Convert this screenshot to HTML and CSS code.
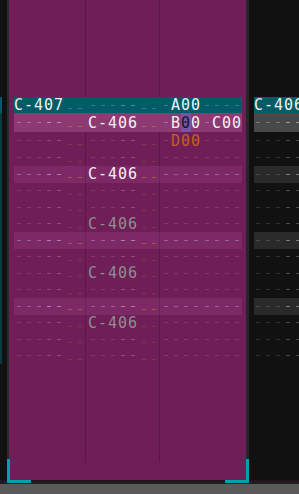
FILE: index.html
```html
<!DOCTYPE html>
<html>
<head>
<meta charset="utf-8">
<link rel="stylesheet" href="styles.css">
</head>
<body>
<div class="app">
  <div class="main">
    <div class="prev"><div class="prev-play"></div><div class="prev-rest"></div></div>
    <div class="gap"></div>
    <div class="lborder"></div>
    <div class="pattern">
      <div class="row play">
        <span class="g n"><b class="t">C-407</b></span>
        <span class="g v"><i class="m vo"></i><i class="m vo"></i></span>
        <span class="g n c2"><i class="m"></i><i class="m"></i><i class="m"></i><i class="m in"></i><i class="m in"></i></span>
        <span class="g v"><i class="m vo"></i><i class="m vo"></i></span>
        <span class="g f f1"><i class="m fx"></i><b class="t">A00</b></span>
        <span class="g f f2"><i class="m fx"></i><i class="m fx"></i><i class="m fx"></i><i class="m fx"></i></span>
      </div>
      <div class="row cur">
        <span class="g n"><i class="m"></i><i class="m"></i><i class="m"></i><i class="m in"></i><i class="m in"></i></span>
        <span class="g v"><i class="m vo"></i><i class="m vo"></i></span>
        <span class="g n c2"><b class="t">C-406</b></span>
        <span class="g v"><i class="m vo"></i><i class="m vo"></i></span>
        <span class="g f f1"><i class="m fx"></i><b class="t">B</b><b class="t k">0</b><b class="t">0</b></span>
        <span class="g f f2"><i class="m fx"></i><b class="t">C00</b></span>
      </div>
      <div class="row t17">
        <span class="g n"><i class="m"></i><i class="m"></i><i class="m"></i><i class="m in"></i><i class="m in"></i></span>
        <span class="g v"><i class="m vo"></i><i class="m vo"></i></span>
        <span class="g n c2"><i class="m"></i><i class="m"></i><i class="m"></i><i class="m in"></i><i class="m in"></i></span>
        <span class="g v"><i class="m vo"></i><i class="m vo"></i></span>
        <span class="g f f1"><i class="m fx"></i><b class="t or">D00</b></span>
        <span class="g f f2"><i class="m fx"></i><i class="m fx"></i><i class="m fx"></i><i class="m fx"></i></span>
      </div>
      <div class="row t17">
        <span class="g n"><i class="m"></i><i class="m"></i><i class="m"></i><i class="m in"></i><i class="m in"></i></span>
        <span class="g v"><i class="m vo"></i><i class="m vo"></i></span>
        <span class="g n c2"><i class="m"></i><i class="m"></i><i class="m"></i><i class="m in"></i><i class="m in"></i></span>
        <span class="g v"><i class="m vo"></i><i class="m vo"></i></span>
        <span class="g f f1"><i class="m fx"></i><i class="m fx"></i><i class="m fx"></i><i class="m fx"></i></span>
        <span class="g f f2"><i class="m fx"></i><i class="m fx"></i><i class="m fx"></i><i class="m fx"></i></span>
      </div>
      <div class="row hl">
        <span class="g n"><i class="m"></i><i class="m"></i><i class="m"></i><i class="m in"></i><i class="m in"></i></span>
        <span class="g v"><i class="m vo"></i><i class="m vo"></i></span>
        <span class="g n c2"><b class="t">C-406</b></span>
        <span class="g v"><i class="m vo"></i><i class="m vo"></i></span>
        <span class="g f f1"><i class="m fx"></i><i class="m fx"></i><i class="m fx"></i><i class="m fx"></i></span>
        <span class="g f f2"><i class="m fx"></i><i class="m fx"></i><i class="m fx"></i><i class="m fx"></i></span>
      </div>
      <div class="row">
        <span class="g n"><i class="m"></i><i class="m"></i><i class="m"></i><i class="m in"></i><i class="m in"></i></span>
        <span class="g v"><i class="m vo"></i><i class="m vo"></i></span>
        <span class="g n c2"><i class="m"></i><i class="m"></i><i class="m"></i><i class="m in"></i><i class="m in"></i></span>
        <span class="g v"><i class="m vo"></i><i class="m vo"></i></span>
        <span class="g f f1"><i class="m fx"></i><i class="m fx"></i><i class="m fx"></i><i class="m fx"></i></span>
        <span class="g f f2"><i class="m fx"></i><i class="m fx"></i><i class="m fx"></i><i class="m fx"></i></span>
      </div>
      <div class="row">
        <span class="g n"><i class="m"></i><i class="m"></i><i class="m"></i><i class="m in"></i><i class="m in"></i></span>
        <span class="g v"><i class="m vo"></i><i class="m vo"></i></span>
        <span class="g n c2"><i class="m"></i><i class="m"></i><i class="m"></i><i class="m in"></i><i class="m in"></i></span>
        <span class="g v"><i class="m vo"></i><i class="m vo"></i></span>
        <span class="g f f1"><i class="m fx"></i><i class="m fx"></i><i class="m fx"></i><i class="m fx"></i></span>
        <span class="g f f2"><i class="m fx"></i><i class="m fx"></i><i class="m fx"></i><i class="m fx"></i></span>
      </div>
      <div class="row">
        <span class="g n"><i class="m"></i><i class="m"></i><i class="m"></i><i class="m in"></i><i class="m in"></i></span>
        <span class="g v"><i class="m vo"></i><i class="m vo"></i></span>
        <span class="g n c2"><b class="t dim">C-406</b></span>
        <span class="g v"><i class="m vo"></i><i class="m vo"></i></span>
        <span class="g f f1"><i class="m fx"></i><i class="m fx"></i><i class="m fx"></i><i class="m fx"></i></span>
        <span class="g f f2"><i class="m fx"></i><i class="m fx"></i><i class="m fx"></i><i class="m fx"></i></span>
      </div>
      <div class="row hl">
        <span class="g n"><i class="m"></i><i class="m"></i><i class="m"></i><i class="m in"></i><i class="m in"></i></span>
        <span class="g v"><i class="m vo"></i><i class="m vo"></i></span>
        <span class="g n c2"><i class="m"></i><i class="m"></i><i class="m"></i><i class="m in"></i><i class="m in"></i></span>
        <span class="g v"><i class="m vo"></i><i class="m vo"></i></span>
        <span class="g f f1"><i class="m fx"></i><i class="m fx"></i><i class="m fx"></i><i class="m fx"></i></span>
        <span class="g f f2"><i class="m fx"></i><i class="m fx"></i><i class="m fx"></i><i class="m fx"></i></span>
      </div>
      <div class="row">
        <span class="g n"><i class="m"></i><i class="m"></i><i class="m"></i><i class="m in"></i><i class="m in"></i></span>
        <span class="g v"><i class="m vo"></i><i class="m vo"></i></span>
        <span class="g n c2"><i class="m"></i><i class="m"></i><i class="m"></i><i class="m in"></i><i class="m in"></i></span>
        <span class="g v"><i class="m vo"></i><i class="m vo"></i></span>
        <span class="g f f1"><i class="m fx"></i><i class="m fx"></i><i class="m fx"></i><i class="m fx"></i></span>
        <span class="g f f2"><i class="m fx"></i><i class="m fx"></i><i class="m fx"></i><i class="m fx"></i></span>
      </div>
      <div class="row">
        <span class="g n"><i class="m"></i><i class="m"></i><i class="m"></i><i class="m in"></i><i class="m in"></i></span>
        <span class="g v"><i class="m vo"></i><i class="m vo"></i></span>
        <span class="g n c2"><b class="t dim">C-406</b></span>
        <span class="g v"><i class="m vo"></i><i class="m vo"></i></span>
        <span class="g f f1"><i class="m fx"></i><i class="m fx"></i><i class="m fx"></i><i class="m fx"></i></span>
        <span class="g f f2"><i class="m fx"></i><i class="m fx"></i><i class="m fx"></i><i class="m fx"></i></span>
      </div>
      <div class="row">
        <span class="g n"><i class="m"></i><i class="m"></i><i class="m"></i><i class="m in"></i><i class="m in"></i></span>
        <span class="g v"><i class="m vo"></i><i class="m vo"></i></span>
        <span class="g n c2"><i class="m"></i><i class="m"></i><i class="m"></i><i class="m in"></i><i class="m in"></i></span>
        <span class="g v"><i class="m vo"></i><i class="m vo"></i></span>
        <span class="g f f1"><i class="m fx"></i><i class="m fx"></i><i class="m fx"></i><i class="m fx"></i></span>
        <span class="g f f2"><i class="m fx"></i><i class="m fx"></i><i class="m fx"></i><i class="m fx"></i></span>
      </div>
      <div class="row hl">
        <span class="g n"><i class="m"></i><i class="m"></i><i class="m"></i><i class="m in"></i><i class="m in"></i></span>
        <span class="g v"><i class="m vo"></i><i class="m vo"></i></span>
        <span class="g n c2"><i class="m"></i><i class="m"></i><i class="m"></i><i class="m in"></i><i class="m in"></i></span>
        <span class="g v"><i class="m vo"></i><i class="m vo"></i></span>
        <span class="g f f1"><i class="m fx"></i><i class="m fx"></i><i class="m fx"></i><i class="m fx"></i></span>
        <span class="g f f2"><i class="m fx"></i><i class="m fx"></i><i class="m fx"></i><i class="m fx"></i></span>
      </div>
      <div class="row">
        <span class="g n"><i class="m"></i><i class="m"></i><i class="m"></i><i class="m in"></i><i class="m in"></i></span>
        <span class="g v"><i class="m vo"></i><i class="m vo"></i></span>
        <span class="g n c2"><b class="t dim">C-406</b></span>
        <span class="g v"><i class="m vo"></i><i class="m vo"></i></span>
        <span class="g f f1"><i class="m fx"></i><i class="m fx"></i><i class="m fx"></i><i class="m fx"></i></span>
        <span class="g f f2"><i class="m fx"></i><i class="m fx"></i><i class="m fx"></i><i class="m fx"></i></span>
      </div>
      <div class="row">
        <span class="g n"><i class="m"></i><i class="m"></i><i class="m"></i><i class="m in"></i><i class="m in"></i></span>
        <span class="g v"><i class="m vo"></i><i class="m vo"></i></span>
        <span class="g n c2"><i class="m"></i><i class="m"></i><i class="m"></i><i class="m in"></i><i class="m in"></i></span>
        <span class="g v"><i class="m vo"></i><i class="m vo"></i></span>
        <span class="g f f1"><i class="m fx"></i><i class="m fx"></i><i class="m fx"></i><i class="m fx"></i></span>
        <span class="g f f2"><i class="m fx"></i><i class="m fx"></i><i class="m fx"></i><i class="m fx"></i></span>
      </div>
      <div class="row">
        <span class="g n"><i class="m"></i><i class="m"></i><i class="m"></i><i class="m in"></i><i class="m in"></i></span>
        <span class="g v"><i class="m vo"></i><i class="m vo"></i></span>
        <span class="g n c2"><i class="m"></i><i class="m"></i><i class="m"></i><i class="m in"></i><i class="m in"></i></span>
        <span class="g v"><i class="m vo"></i><i class="m vo"></i></span>
        <span class="g f f1"><i class="m fx"></i><i class="m fx"></i><i class="m fx"></i><i class="m fx"></i></span>
        <span class="g f f2"><i class="m fx"></i><i class="m fx"></i><i class="m fx"></i><i class="m fx"></i></span>
      </div>
    </div>
    <div class="rborder"></div>
    <div class="next">
      <div class="row play"><b class="t">C-406</b></div>
      <div class="row cur"><i class="m"></i><i class="m"></i><i class="m"></i><i class="m in"></i><i class="m in"></i></div>
      <div class="row t17"><i class="m"></i><i class="m"></i><i class="m"></i><i class="m in"></i><i class="m in"></i></div>
      <div class="row t17"><i class="m"></i><i class="m"></i><i class="m"></i><i class="m in"></i><i class="m in"></i></div>
      <div class="row hl"><i class="m"></i><i class="m"></i><i class="m"></i><i class="m in"></i><i class="m in"></i></div>
      <div class="row"><i class="m"></i><i class="m"></i><i class="m"></i><i class="m in"></i><i class="m in"></i></div>
      <div class="row"><i class="m"></i><i class="m"></i><i class="m"></i><i class="m in"></i><i class="m in"></i></div>
      <div class="row"><i class="m"></i><i class="m"></i><i class="m"></i><i class="m in"></i><i class="m in"></i></div>
      <div class="row hl"><i class="m"></i><i class="m"></i><i class="m"></i><i class="m in"></i><i class="m in"></i></div>
      <div class="row"><i class="m"></i><i class="m"></i><i class="m"></i><i class="m in"></i><i class="m in"></i></div>
      <div class="row"><i class="m"></i><i class="m"></i><i class="m"></i><i class="m in"></i><i class="m in"></i></div>
      <div class="row"><i class="m"></i><i class="m"></i><i class="m"></i><i class="m in"></i><i class="m in"></i></div>
      <div class="row hl"><i class="m"></i><i class="m"></i><i class="m"></i><i class="m in"></i><i class="m in"></i></div>
      <div class="row"><i class="m"></i><i class="m"></i><i class="m"></i><i class="m in"></i><i class="m in"></i></div>
      <div class="row"><i class="m"></i><i class="m"></i><i class="m"></i><i class="m in"></i><i class="m in"></i></div>
      <div class="row"><i class="m"></i><i class="m"></i><i class="m"></i><i class="m in"></i><i class="m in"></i></div>
    </div>
  </div>
  <div class="under"></div>
  <div class="footer"></div>
  <div class="focus focus-l"></div>
  <div class="focus focus-r"></div>
</div>
</body>
</html>
```

FILE: styles.css
```css
* { box-sizing: border-box; }
html, body { margin: 0; padding: 0; background: #111111; }
body { width: 299px; height: 494px; overflow: hidden; font-family: "DejaVu Sans Mono", monospace; }

.app { position: relative; width: 299px; height: 494px; display: flex; flex-direction: column; overflow: hidden; }
.main { height: 480px; display: flex; flex: none; }

.prev { width: 2px; flex: none; padding-top: 97px; display: flex; flex-direction: column; }
.prev-play { height: 16px; background: #015c68; }
.prev-rest { height: 251px; background: #0b3a40; }
.gap { width: 5px; flex: none; background: #111111; }
.lborder { width: 2px; flex: none; background: #2a2a2a; }

.pattern {
  width: 237px; flex: none;
  padding: 97px 0 0 5px;
  background:
    linear-gradient(#5a1747, #5a1747) no-repeat 76px 0 / 1px 462px,
    linear-gradient(#5a1747, #5a1747) no-repeat 150px 0 / 1px 462px,
    #6f1e57;
  --mn: #7c3c6f; --mi: #8a4c7e; --mv: #7e3a3e; --mf: #7c3c6f;
}
.rborder { width: 3px; flex: none; background: #262626; }
.next {
  flex: 1; min-width: 0; overflow: hidden;
  padding: 97px 0 0 5px; background: #111111;
  --mn: #303030; --mi: #4a4a4a;
}

.row { display: flex; align-items: center; height: 16.5px; width: 228px; flex: none; }
.next .row { width: 45px; }
.row.play { height: 16px; background: #015c68; --mn: #2f7f89; --mi: #4a959d; --mv: #2f7f89; --mf: #2f7f89; }
.row.cur { height: 19px; background: #8b3a73; --mn: #aa709d; --mi: #bd88b2; --mv: #b2604e; --mf: #aa709d; }
.row.t17 { height: 17px; }
.row.hl { background: rgba(240, 140, 230, 0.11); --mn: #9a6390; --mi: #b07ea6; --mv: #a65a46; --mf: #9a6390; }
.next .row.cur { background: #484848; --mn: #7a7a7a; --mi: #9a9a9a; }
.next .row.hl { background: #2a2a2a; --mn: #4a4a4a; --mi: #7a7a7a; }

.g { display: flex; align-items: center; align-self: stretch; flex: none; }
.g.n { width: 50px; }
.g.v { width: 20px; margin-left: 1px; }
.g.c2 { margin-left: 3px; }
.g.f { width: 40px; }
.g.f1 { margin-left: 2px; }
.g.f2 { margin-left: 1px; }

.m {
  display: block; width: 10px; flex: none; align-self: stretch;
  color: var(--mn);
  background: linear-gradient(currentColor, currentColor) no-repeat 3px 50% / 4px 1px;
}
.next .m { background-position: 2px 50%; }
.m.in { color: var(--mi); }
.m.vo { color: var(--mv); background-position: 3px calc(50% + 3.5px); }
.m.fx { color: var(--mf); }

.t {
  display: block; flex: none;
  font: 400 15px/16px "DejaVu Sans Mono", monospace;
  letter-spacing: 0.97px;
  color: #f2f2f2;
  white-space: pre;
}
.t.dim { color: #8e8e8e; }
.t.or { color: #c4601e; }
.t.k { align-self: stretch; display: flex; align-items: center; background: #7556a4; color: #14142e; }

.under { height: 4px; flex: none; background: #1e1e1e; border-top: 1px solid #2a0e22; }
.footer { flex: 1; background: #5a5a5a; }

.focus { position: absolute; top: 459px; width: 24px; height: 24px; border-bottom: 3px solid #00a0b4; }
.focus-l { left: 7px; border-left: 3px solid #00a0b4; }
.focus-r { left: 225px; border-right: 3px solid #00a0b4; }
```
